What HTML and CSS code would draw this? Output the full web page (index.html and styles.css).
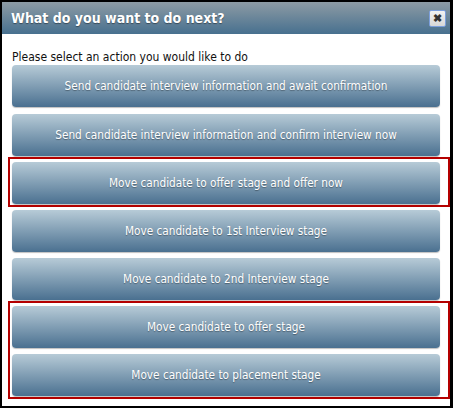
FILE: index.html
```html
<!DOCTYPE html>
<html lang="en">
<head>
  <meta charset="UTF-8" />
  <title>What do you want to do next?</title>
  <link rel="stylesheet" href="styles.css">
</head>
<body>
  <div class="dialog">
    <div class="dialog-title">
      <span>What do you want to do next?</span>
      <button class="close-btn" title="Close">&#10006;</button>
    </div>

    <div class="dialog-body">
      <p class="prompt">Please select an action you would like to do</p>

      <button class="action-btn first">Send candidate interview information and await confirmation</button>
      <button class="action-btn">Send candidate interview information and confirm interview now</button>

      <div class="highlight">
        <button class="action-btn">Move candidate to offer stage and offer now</button>
      </div>

      <button class="action-btn">Move candidate to 1st Interview stage</button>
      <button class="action-btn">Move candidate to 2nd Interview stage</button>

      <div class="highlight">
        <button class="action-btn">Move candidate to offer stage</button>
        <button class="action-btn">Move candidate to placement stage</button>
      </div>
    </div>
  </div>
</body>
</html>
```

FILE: styles.css
```css
:root {
  --btn-top: #b7cbd7;
  --btn-bottom: #4a7090;
  --red: #b40000;
}

body {
  margin: 0;
  font-family: 'DejaVu Sans Condensed', 'DejaVu Sans', sans-serif;
  background: #fff;
}

.dialog {
  width: 453px;
  height: 408px;
  box-sizing: border-box;
  border: 2px solid #000;
  border-right-width: 3px;
  background: #fff;
}

.dialog-title {
  height: 32px;
  display: flex;
  align-items: center;
  justify-content: space-between;
  padding: 0 4px 0 9px;
  background: linear-gradient(to bottom, #8d9ba4, #47708f);
  color: #fff;
  font-weight: bold;
  font-size: 14px;
  text-shadow: 0 1px 1px rgba(0, 0, 0, 0.4);
}

.close-btn {
  width: 17px;
  height: 17px;
  padding: 0;
  border: 1px solid #7c9fdc;
  border-radius: 2px;
  background: linear-gradient(to bottom, #f2f2f2, #d8d8d8);
  color: #333;
  font-size: 11px;
  font-weight: bold;
  line-height: 15px;
  cursor: pointer;
}

.dialog-body {
  padding: 0 0 0 10px;
}

.prompt {
  margin: 16px 0 0;
  font-size: 12px;
  line-height: 15px;
  color: #111;
}

.action-btn {
  display: block;
  width: 428px;
  height: 42px;
  margin: 0 0 6px;
  border: none;
  border-radius: 4px;
  background: linear-gradient(to bottom, var(--btn-top), var(--btn-bottom));
  color: #fff;
  font-family: inherit;
  font-size: 11.7px;
  text-shadow: 0 1px 1px rgba(0, 0, 0, 0.35);
  box-shadow: 0 1px 1px rgba(0, 0, 0, 0.25);
  cursor: pointer;
}

.action-btn.first {
  margin-bottom: 7px;
}

.action-btn:hover {
  background: linear-gradient(to bottom, #c4d6e0, #557c9c);
}

.highlight {
  width: 434px;
  margin: -5px 0 3px -4px;
  padding: 3px 2px 0 2px;
  border: 2px solid var(--red);
}

.highlight .action-btn:last-child {
  margin-bottom: 1px;
}
```
